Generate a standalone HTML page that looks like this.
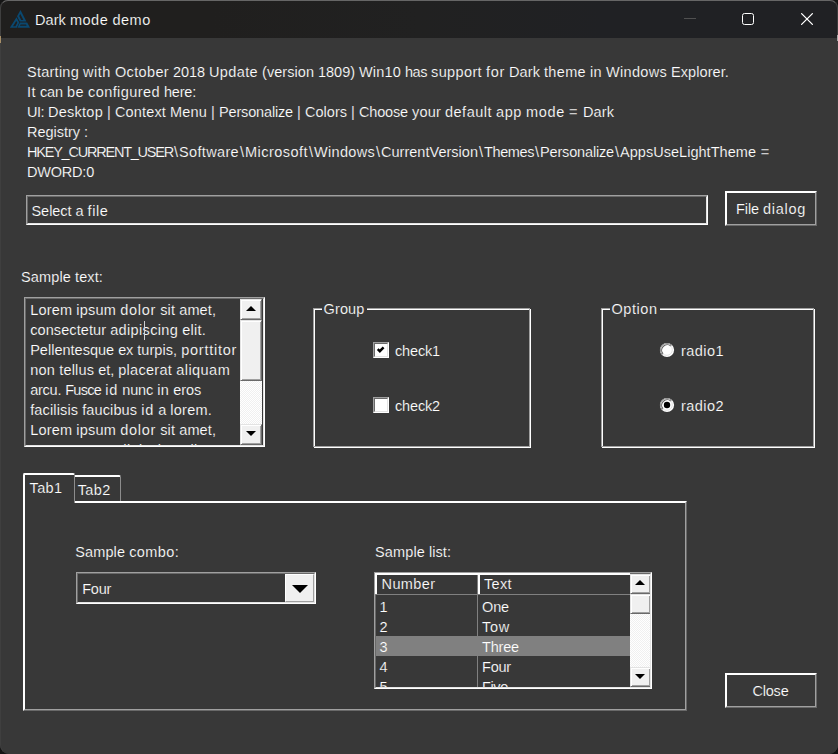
<!DOCTYPE html><html><head><meta charset="utf-8"><title>Dark mode demo</title><style>
*{box-sizing:border-box;margin:0;padding:0}
html,body{width:838px;height:754px;overflow:hidden;background:#151515}
body{position:relative;font:14.5px "Liberation Sans",sans-serif;color:#fff}
.abs{position:absolute}
#win{position:absolute;left:0;top:0;width:838px;height:754px;background:#383838;border-radius:8px 8px 9px 9px;overflow:hidden}
#winb{position:absolute;left:0;top:0;width:838px;height:754px;border-radius:8px 8px 9px 9px;border:1px solid;border-color:#666 #3c3c3c #383838 #3f3f3f;pointer-events:none}
#tb{position:absolute;left:0;top:0;width:838px;height:38px;background:linear-gradient(90deg,#201f1e 0%,#201f1e 25%,#212121 50%,#202124 72%)}
.t{position:absolute;white-space:pre;line-height:20px;height:20px;color:#fff;-webkit-text-stroke:0.16px #383838}
.sunk{position:absolute;border:1px solid;border-color:#a0a0a0 #fff #fff #a0a0a0}
.sunk>.in{position:absolute;left:0;top:0;right:0;bottom:0;border:1px solid;border-color:#696969 #e3e3e3 #e3e3e3 #696969;overflow:hidden}
.btn{position:absolute;border:1px solid;border-color:#fff #696969 #696969 #fff}
.btn>.in{position:absolute;left:0;top:0;right:0;bottom:0;border:1px solid;border-color:#fff #a0a0a0 #a0a0a0 #fff}
.grp{position:absolute;border:1px solid #a0a0a0;box-shadow:1px 1px 0 #fff, inset 1px 1px 0 #fff}
.sbtn{position:absolute;background:#f0f0f0;border:1px solid;border-color:#e3e3e3 #696969 #696969 #e3e3e3;box-shadow:inset 1px 1px 0 #fff, inset -1px -1px 0 #a0a0a0}
.trk{position:absolute;background-color:#f0f0f0;background-image:conic-gradient(#fff 25%,#f0f0f0 0 50%,#fff 0 75%,#f0f0f0 0);background-size:2px 2px}
.tri{position:absolute;width:0;height:0;border-style:solid}
</style></head><body>
<div id="win">
<div id="tb"></div>
<svg class="abs" style="left:0;top:0" width="40" height="38" viewBox="0 0 40 38">
<g fill="#0a4870" fill-rule="evenodd">
<path d="M20.5 10 L26.4 21.6 L19.8 21.6 L17 16.2 Z M20.3 14 L19.2 16 L21.2 19.9 L23.4 19.9 Z"/>
<path d="M16.5 17.2 L19.3 22.6 L16.8 27.8 L9.8 27.8 Z M16.3 20.9 L13 26.2 L15.4 26.2 L17.3 22.7 Z"/>
<path d="M19.9 22.6 L27.2 22.6 L30 27.8 L17.4 27.8 Z M20.6 24.4 L20 25.8 L26.6 25.8 L26 24.4 Z"/>
</g></svg>
<span class="t" style="left:35.0px;top:10px;letter-spacing:0.047px;-webkit-text-stroke-color:#201f1e;">Dark </span><span class="t" style="left:69.92px;top:10px;letter-spacing:0.524px;-webkit-text-stroke-color:#201f1e;">mode </span><span class="t" style="left:112.41px;top:10px;letter-spacing:0.524px;-webkit-text-stroke-color:#201f1e;">demo</span>
<div class="abs" style="left:684px;top:18px;width:12px;height:1px;background:#505050"></div>
<div class="abs" style="left:742px;top:13px;width:12px;height:12px;border:1.5px solid #fff;border-radius:2.5px"></div>
<svg class="abs" style="left:799px;top:11px" width="16" height="16" viewBox="0 0 16 16"><path d="M2.6 2.6 L13.4 13.4 M13.4 2.6 L2.6 13.4" stroke="#fff" stroke-width="1.3" fill="none" stroke-linecap="round"/></svg>
<span class="t" style="left:27.0px;top:62px;letter-spacing:0.252px;">Starting </span><span class="t" style="left:83.0px;top:62px;letter-spacing:0.551px;">with </span><span class="t" style="left:115.0px;top:62px;letter-spacing:0.344px;">October </span><span class="t" style="left:173.0px;top:62px;letter-spacing:-0.066px;">2018 </span><span class="t" style="left:209.0px;top:62px;letter-spacing:0.372px;">Update </span><span class="t" style="left:262.0px;top:62px;letter-spacing:0.053px;">(version </span><span class="t" style="left:318.0px;top:62px;letter-spacing:-0.019px;">1809) </span><span class="t" style="left:359.0px;top:62px;letter-spacing:0.178px;">Win10 </span><span class="t" style="left:405.0px;top:62px;letter-spacing:-0.464px;">has </span><span class="t" style="left:431.0px;top:62px;letter-spacing:0.375px;">support </span><span class="t" style="left:486.0px;top:62px;letter-spacing:0.693px;">for </span><span class="t" style="left:509.0px;top:62px;letter-spacing:0.094px;">Dark </span><span class="t" style="left:544.0px;top:62px;letter-spacing:0.338px;">theme </span><span class="t" style="left:590.0px;top:62px;letter-spacing:0.352px;">in </span><span class="t" style="left:606.0px;top:62px;letter-spacing:0.31px;">Windows </span><span class="t" style="left:671.0px;top:62px;letter-spacing:0.085px;">Explorer.</span>
<span class="t" style="left:27.0px;top:82px;letter-spacing:0.469px;">It </span><span class="t" style="left:40.0px;top:82px;letter-spacing:-0.13px;">can </span><span class="t" style="left:67.0px;top:82px;letter-spacing:0.43px;">be </span><span class="t" style="left:88.0px;top:82px;letter-spacing:0.428px;">configured </span><span class="t" style="left:164.0px;top:82px;letter-spacing:-0.212px;">here:</span>
<span class="t" style="left:27.0px;top:102px;letter-spacing:-0.51px;">UI: </span><span class="t" style="left:48.0px;top:102px;letter-spacing:0.257px;">Desktop </span><span class="t" style="left:107.0px;top:102px;width:4px;text-align:center;">| </span><span class="t" style="left:115.0px;top:102px;letter-spacing:0.145px;">Context </span><span class="t" style="left:170.0px;top:102px;letter-spacing:0.18px;">Menu </span><span class="t" style="left:211.0px;top:102px;width:4px;text-align:center;">| </span><span class="t" style="left:219.0px;top:102px;letter-spacing:-0.161px;">Personalize </span><span class="t" style="left:297.0px;top:102px;width:4px;text-align:center;">| </span><span class="t" style="left:305.0px;top:102px;letter-spacing:0.016px;">Colors </span><span class="t" style="left:351.0px;top:102px;width:4px;text-align:center;">| </span><span class="t" style="left:359.0px;top:102px;letter-spacing:-0.164px;">Choose </span><span class="t" style="left:412.0px;top:102px;letter-spacing:0.195px;">your </span><span class="t" style="left:445.0px;top:102px;letter-spacing:0.493px;">default </span><span class="t" style="left:496.0px;top:102px;letter-spacing:0.599px;">app </span><span class="t" style="left:526.0px;top:102px;letter-spacing:0.68px;">mode </span><span class="t" style="left:569.0px;top:102px;width:10px;text-align:center;">= </span><span class="t" style="left:583.0px;top:102px;letter-spacing:0.094px;">Dark</span>
<span class="t" style="left:27.0px;top:122px;letter-spacing:-0.023px;">Registry </span><span class="t" style="left:84.0px;top:122px;width:3px;text-align:center;">:</span>
<span class="t" style="left:27.0px;top:142px;letter-spacing:-1.223px;">HKEY_CURRENT_USER</span><span class="t" style="left:173.0px;top:142px;width:6px;text-align:center;">\</span><span class="t" style="left:179.0px;top:142px;letter-spacing:0.346px;">Software</span><span class="t" style="left:239.0px;top:142px;width:6px;text-align:center;">\</span><span class="t" style="left:245.0px;top:142px;letter-spacing:0.464px;">Microsoft</span><span class="t" style="left:308.0px;top:142px;width:6px;text-align:center;">\</span><span class="t" style="left:314.0px;top:142px;letter-spacing:0.31px;">Windows</span><span class="t" style="left:375.0px;top:142px;width:6px;text-align:center;">\</span><span class="t" style="left:381.0px;top:142px;letter-spacing:0.02px;">CurrentVersion</span><span class="t" style="left:478.0px;top:142px;width:6px;text-align:center;">\</span><span class="t" style="left:484.0px;top:142px;letter-spacing:-0.398px;">Themes</span><span class="t" style="left:534.0px;top:142px;width:6px;text-align:center;">\</span><span class="t" style="left:540.0px;top:142px;letter-spacing:-0.161px;">Personalize</span><span class="t" style="left:614.0px;top:142px;width:6px;text-align:center;">\</span><span class="t" style="left:620.0px;top:142px;letter-spacing:0.034px;">AppsUseLightTheme </span><span class="t" style="left:760.0px;top:142px;width:10px;text-align:center;">=</span>
<span class="t" style="left:27.0px;top:162px;letter-spacing:-0.212px;">DWORD:0</span>
<div class="sunk" style="left:26px;top:195px;width:682px;height:30px"><div class="in"></div></div>
<span class="t" style="left:31.5px;top:201px;letter-spacing:-0.052px;">Select </span><span class="t" style="left:75.5px;top:201px;width:8px;text-align:center;">a </span><span class="t" style="left:87.5px;top:201px;letter-spacing:0.613px;">file</span>
<div class="btn" style="left:725px;top:191px;width:92px;height:35px"><div class="in"></div></div>
<span class="t" style="left:736px;top:199px;letter-spacing:-0.094px;">File </span><span class="t" style="left:763px;top:199px;letter-spacing:0.716px;">dialog</span>
<span class="t" style="left:21px;top:267px;letter-spacing:0.138px;">Sample </span><span class="t" style="left:75px;top:267px;letter-spacing:0.119px;">text:</span>
<div class="sunk" style="left:24px;top:297px;width:241px;height:150px"><div class="in">
<span class="t" style="left:4.2px;top:1px;letter-spacing:0.178px;">Lorem </span><span class="t" style="left:50.2px;top:1px;letter-spacing:0.263px;">ipsum </span><span class="t" style="left:94.2px;top:1px;letter-spacing:0.75px;">dolor </span><span class="t" style="left:134.2px;top:1px;letter-spacing:0.167px;">sit </span><span class="t" style="left:153.2px;top:1px;letter-spacing:0.147px;">amet,</span>
<span class="t" style="left:4.2px;top:21px;letter-spacing:0.094px;">consectetur </span><span class="t" style="left:84.2px;top:21px;letter-spacing:0.35px;">adipiscing </span><span class="t" style="left:156.2px;top:21px;letter-spacing:0.284px;">elit.</span>
<span class="t" style="left:4.2px;top:41px;letter-spacing:0.013px;">Pellentesque </span><span class="t" style="left:92.2px;top:41px;letter-spacing:-0.164px;">ex </span><span class="t" style="left:111.2px;top:41px;letter-spacing:0.071px;">turpis, </span><span class="t" style="left:155.2px;top:41px;letter-spacing:0.759px;">porttitor</span>
<span class="t" style="left:4.2px;top:61px;letter-spacing:0.266px;">non </span><span class="t" style="left:33.2px;top:61px;letter-spacing:0.19px;">tellus </span><span class="t" style="left:72.2px;top:61px;letter-spacing:-0.042px;">et, </span><span class="t" style="left:92.2px;top:61px;letter-spacing:0.301px;">placerat </span><span class="t" style="left:150.2px;top:61px;letter-spacing:0.46px;">aliquam</span>
<span class="t" style="left:4.2px;top:81px;letter-spacing:-0.25px;">arcu. </span><span class="t" style="left:39.2px;top:81px;letter-spacing:-0.7px;">Fusce </span><span class="t" style="left:79.2px;top:81px;letter-spacing:0.852px;">id </span><span class="t" style="left:96.2px;top:81px;letter-spacing:-0.113px;">nunc </span><span class="t" style="left:131.2px;top:81px;letter-spacing:0.352px;">in </span><span class="t" style="left:147.2px;top:81px;letter-spacing:-0.055px;">eros</span>
<span class="t" style="left:4.2px;top:101px;letter-spacing:0.141px;">facilisis </span><span class="t" style="left:56.2px;top:101px;letter-spacing:0.123px;">faucibus </span><span class="t" style="left:115.2px;top:101px;letter-spacing:0.852px;">id </span><span class="t" style="left:132.2px;top:101px;width:8px;text-align:center;">a </span><span class="t" style="left:144.2px;top:101px;letter-spacing:0.284px;">lorem.</span>
<span class="t" style="left:4.2px;top:121px;letter-spacing:0.178px;">Lorem </span><span class="t" style="left:50.2px;top:121px;letter-spacing:0.263px;">ipsum </span><span class="t" style="left:94.2px;top:121px;letter-spacing:0.75px;">dolor </span><span class="t" style="left:134.2px;top:121px;letter-spacing:0.167px;">sit </span><span class="t" style="left:153.2px;top:121px;letter-spacing:0.147px;">amet,</span>
<span class="t" style="left:4.2px;top:141px;letter-spacing:0.094px;">consectetur </span><span class="t" style="left:84.2px;top:141px;letter-spacing:0.35px;">adipiscing </span><span class="t" style="left:156.2px;top:141px;letter-spacing:0.284px;">elit.</span>
<div class="abs" style="left:118px;top:22px;width:1px;height:19px;background:#d0d0d0"></div>
<div class="trk" style="left:214px;top:0;width:22px;height:146px"></div>
<div class="sbtn" style="left:214px;top:0;width:22px;height:21px"></div>
<div class="tri" style="left:220px;top:7px;border-width:0 5px 5.5px 5px;border-color:transparent transparent #000 transparent"></div>
<div class="sbtn" style="left:214px;top:21px;width:22px;height:61px"></div>
<div class="sbtn" style="left:214px;top:125px;width:22px;height:21px"></div>
<div class="tri" style="left:220px;top:132px;border-width:5.5px 5px 0 5px;border-color:#000 transparent transparent transparent"></div>
</div></div>
<div class="grp" style="left:313px;top:308px;width:217px;height:139px"></div>
<div class="abs" style="left:322px;top:306px;width:45px;height:6px;background:#383838"></div>
<span class="t" style="left:323.5px;top:299px;letter-spacing:0.138px;">Group</span>
<div class="grp" style="left:601px;top:308px;width:213px;height:139px"></div>
<div class="abs" style="left:610px;top:306px;width:50px;height:6px;background:#383838"></div>
<span class="t" style="left:611.5px;top:299px;letter-spacing:0.544px;">Option</span>
<div class="sunk" style="left:373px;top:342px;width:16px;height:16px;background:#fff"><div class="in"></div></div><svg class="abs" style="left:373px;top:342px" width="16" height="16" viewBox="0 0 16 16"><path d="M4.7 7.2 L6.8 9.2 L10.6 5.3" stroke="#000" stroke-width="2.4" fill="none"/></svg>
<span class="t" style="left:395px;top:341px;letter-spacing:-0.159px;">check1</span>
<div class="sunk" style="left:373px;top:397px;width:16px;height:16px;background:#fff"><div class="in"></div></div>
<span class="t" style="left:395px;top:396px;letter-spacing:-0.159px;">check2</span>
<svg class="abs" style="left:658.3px;top:341.3px" width="18" height="18" viewBox="0 0 18 18"><circle cx="9" cy="9" r="7.1" fill="#fff"/><path d="M4.3 13.7 A6.65 6.65 0 0 1 13.7 4.3" fill="none" stroke="#8c8c8c" stroke-width="1"/><path d="M5.05 12.95 A5.6 5.6 0 0 1 12.95 5.05" fill="none" stroke="#5c5c5c" stroke-width="1.1"/><path d="M5.05 12.95 A5.6 5.6 0 0 0 12.95 5.05" fill="none" stroke="#e3e3e3" stroke-width="1"/></svg>
<span class="t" style="left:681px;top:341px;letter-spacing:0.448px;">radio1</span>
<svg class="abs" style="left:658.3px;top:396px" width="18" height="18" viewBox="0 0 18 18"><circle cx="9" cy="9" r="7.1" fill="#fff"/><path d="M4.3 13.7 A6.65 6.65 0 0 1 13.7 4.3" fill="none" stroke="#8c8c8c" stroke-width="1"/><path d="M5.05 12.95 A5.6 5.6 0 0 1 12.95 5.05" fill="none" stroke="#5c5c5c" stroke-width="1.1"/><path d="M5.05 12.95 A5.6 5.6 0 0 0 12.95 5.05" fill="none" stroke="#e3e3e3" stroke-width="1"/><circle cx="9" cy="9" r="3.2" fill="#000"/></svg>
<span class="t" style="left:681px;top:396px;letter-spacing:0.448px;">radio2</span>
<div class="abs" style="left:23px;top:501px;width:664px;height:210px;border:1px solid;border-color:#fff #696969 #696969 #fff"><div class="abs" style="left:0;top:0;right:0;bottom:0;border:1px solid;border-color:#fff #a0a0a0 #a0a0a0 #fff"></div></div>
<div class="abs" style="left:75px;top:475px;width:45.5px;height:26px;border-top:2px solid #fff;border-right:1.5px solid #8c8c8c;border-top-right-radius:2px"></div>
<div class="abs" style="left:23px;top:473px;width:51.5px;height:30px;background:#383838;border-left:2px solid #fff;border-top:2px solid #fff;border-right:1.5px solid #8c8c8c;border-radius:2px 2px 0 0"></div>
<span class="t" style="left:29.5px;top:478px;letter-spacing:0.387px;">Tab1</span>
<span class="t" style="left:77.7px;top:480px;letter-spacing:0.387px;">Tab2</span>
<span class="t" style="left:75.2px;top:542px;letter-spacing:0.138px;">Sample </span><span class="t" style="left:129.2px;top:542px;letter-spacing:0.406px;">combo:</span>
<span class="t" style="left:375px;top:542px;letter-spacing:0.138px;">Sample </span><span class="t" style="left:429px;top:542px;letter-spacing:0.05px;">list:</span>
<div class="sunk" style="left:76px;top:572px;width:240px;height:32px"><div class="in"></div></div>
<div class="abs" style="left:285px;top:574px;width:29px;height:28px;background:#f0f0f0;border:1px solid;border-color:#fff #a0a0a0 #a0a0a0 #fff"></div>
<div class="tri" style="left:291.5px;top:585px;border-width:8px 8px 0 8px;border-color:#000 transparent transparent transparent"></div>
<span class="t" style="left:82.2px;top:579px;letter-spacing:-0.207px;">Four</span>
<div class="sunk" style="left:374px;top:572px;width:278px;height:117px"><div class="in" id="lv">
<div class="abs" style="left:0;top:62px;width:254px;height:20px;background:#808080"></div>
<div class="abs" style="left:101px;top:0;width:1px;height:115px;background:#808080"></div>
<span class="t" style="left:5.5px;top:0px;letter-spacing:0.404px;">Number</span>
<span class="t" style="left:108px;top:0px;letter-spacing:0.352px;">Text</span>
<span class="t" style="left:3.5px;top:23px;width:8px;text-align:center;">1</span>
<span class="t" style="left:3.5px;top:43px;width:8px;text-align:center;">2</span>
<span class="t" style="left:3.5px;top:63px;-webkit-text-stroke-color:#808080;width:8px;text-align:center;">3</span>
<span class="t" style="left:3.5px;top:83px;width:8px;text-align:center;">4</span>
<span class="t" style="left:3.5px;top:103px;width:8px;text-align:center;">5</span>
<span class="t" style="left:106px;top:23px;letter-spacing:-0.141px;">One</span>
<span class="t" style="left:106px;top:43px;letter-spacing:0.734px;">Tow</span>
<span class="t" style="left:106px;top:63px;letter-spacing:-0.178px;-webkit-text-stroke-color:#808080;">Three</span>
<span class="t" style="left:106px;top:83px;letter-spacing:-0.207px;">Four</span>
<span class="t" style="left:106px;top:103px;letter-spacing:-0.352px;">Five</span>
<div class="trk" style="left:254px;top:0;width:21px;height:113px"></div>
<div class="sbtn" style="left:254px;top:0;width:21px;height:20px"></div>
<div class="tri" style="left:259px;top:6px;border-width:0 5px 5.5px 5px;border-color:transparent transparent #000 transparent"></div>
<div class="sbtn" style="left:254px;top:20px;width:21px;height:20px"></div>
<div class="sbtn" style="left:254px;top:93px;width:21px;height:20px"></div>
<div class="tri" style="left:259px;top:100px;border-width:5.5px 5px 0 5px;border-color:#000 transparent transparent transparent"></div>
</div></div>
<div class="abs" style="left:375px;top:573px;width:255px;height:2px;background:#fff"></div>
<div class="abs" style="left:375px;top:573px;width:2px;height:21px;background:#fff"></div>
<div class="abs" style="left:478px;top:573px;width:2px;height:21px;background:#fff"></div>
<div class="abs" style="left:375px;top:594px;width:255px;height:1px;background:#808080"></div>
<div class="btn" style="left:725px;top:673px;width:92px;height:35px"><div class="in"></div></div>
<span class="t" style="left:752.5px;top:681px;letter-spacing:-0.216px;">Close</span>
</div><div id="winb"></div>
<div class="abs" style="left:0;top:36px;width:1px;height:7px;background:#a88f68"></div>
<div class="abs" style="left:837px;top:35px;width:1px;height:6px;background:#a8a8a8"></div>
</body></html>
